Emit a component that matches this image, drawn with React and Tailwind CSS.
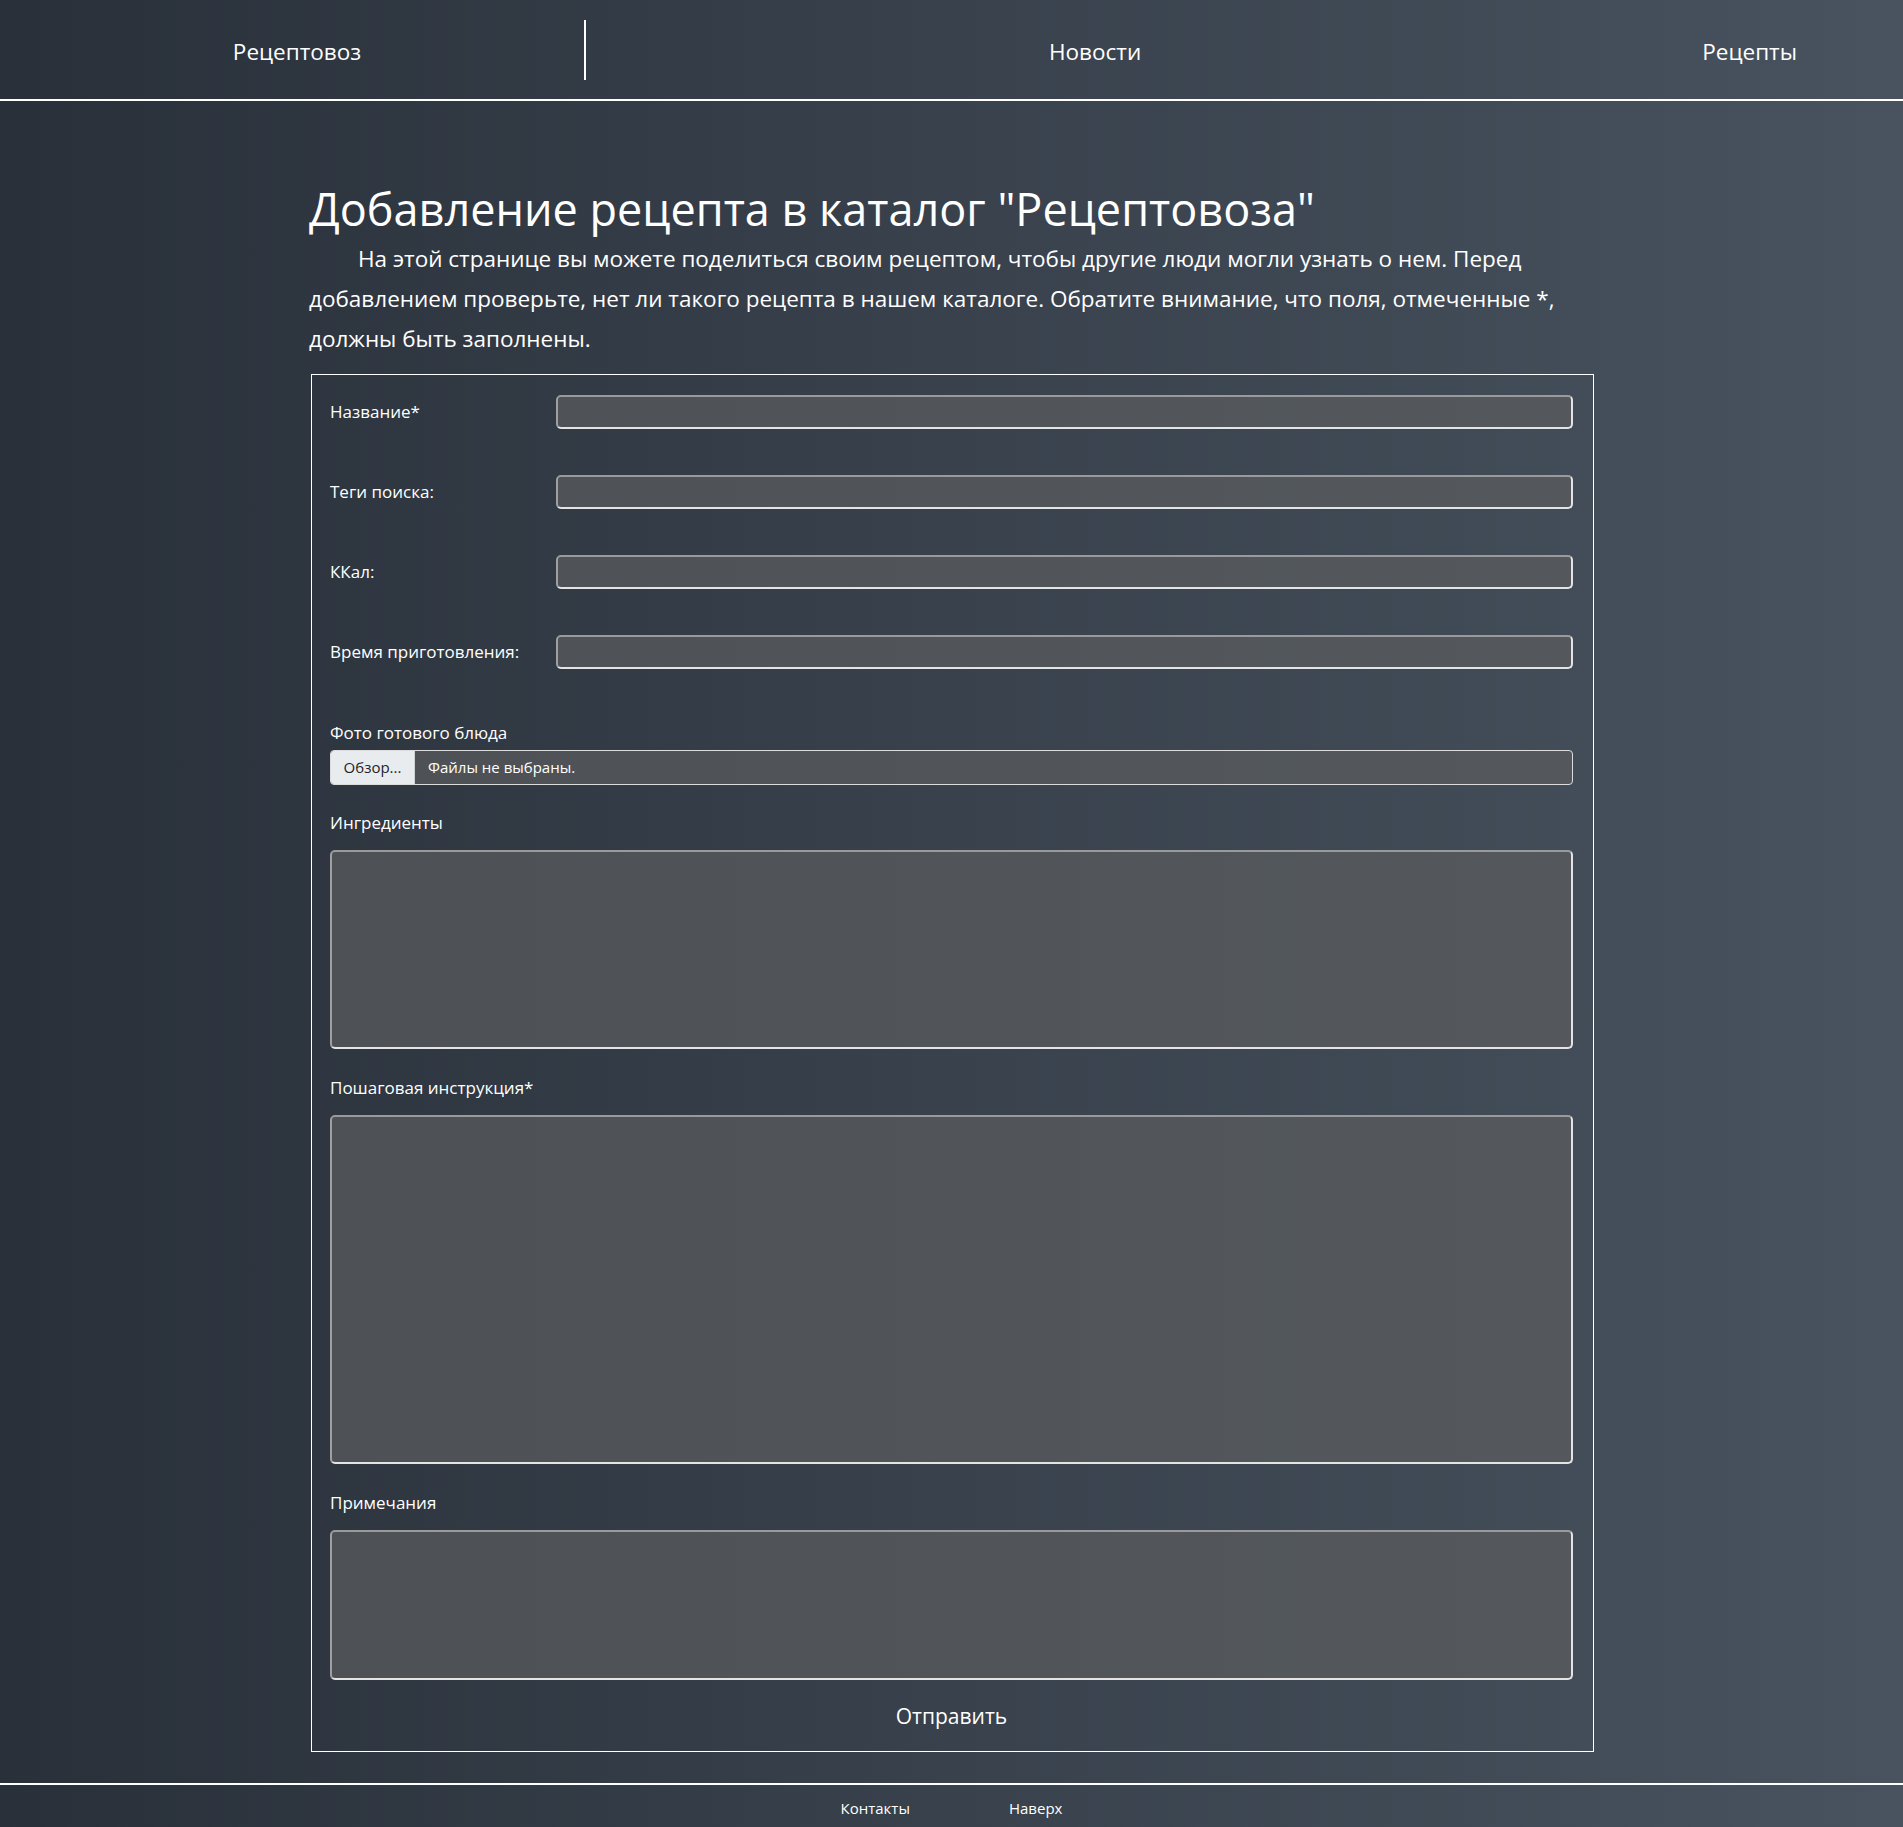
import { useState } from 'react';

const INPUT_CLS =
  'w-full rounded-[5px] border-2 border-t-[#9a9a9a] border-l-[#a0a0a0] border-b-[#e4e4e4] border-r-[#e4e4e4] bg-[rgba(93,94,96,0.68)] text-white outline-none px-2';

const ROWS = [
  { id: 'name', label: 'Название*' },
  { id: 'tags', label: 'Теги поиска:' },
  { id: 'kcal', label: 'ККал:' },
  { id: 'time', label: 'Время приготовления:' },
];

function Field({ label, children, gap = 'mt-[15px]' }) {
  return (
    <div>
      <label className="block text-[17px] leading-[24px]">{label}</label>
      <div className={gap}>{children}</div>
    </div>
  );
}

export default function App() {
  const [form, setForm] = useState({});
  const set = (k) => (e) => setForm({ ...form, [k]: e.target.value });

  return (
    <div className="min-h-screen bg-gradient-to-r from-[#29303a] to-[#48535f] text-white font-['Open_Sans',sans-serif]">
      {/* HEADER */}
      <header className="h-[101px] border-b-2 border-white flex items-center">
        <div className="w-[586px] h-[60px] border-r-2 border-white flex items-center justify-center pl-[10px] pt-[4px] text-[22.5px]">
          Рецептовоз
        </div>
        <nav className="flex-1 flex justify-between pl-[463px] pr-[106px] pt-[4px] text-[22.5px]">
          <a href="#">Новости</a>
          <a href="#">Рецепты</a>
        </nav>
      </header>

      {/* CONTENT */}
      <main className="w-[1285px] mx-auto pt-[81px] pb-[31px]">
        <h1 className="text-[45px] leading-[54px]">Добавление рецепта в каталог "Рецептовоза"</h1>
        <p className="mt-[3px] text-[22.5px] leading-[40px] indent-[49px]">
          На этой странице вы можете поделиться своим рецептом, чтобы другие люди могли узнать о нем. Перед
          добавлением проверьте, нет ли такого рецепта в нашем каталоге. Обратите внимание, что поля, отмеченные *,
          должны быть заполнены.
        </p>

        <form
          className="mt-[15px] ml-[2px] w-[1283px] border border-white pt-[20px] pb-[20px] pl-[18px] pr-[20px]"
          onSubmit={(e) => e.preventDefault()}
        >
          <div className="flex flex-col gap-[46px]">
            {ROWS.map((r) => (
              <div key={r.id} className="flex items-center">
                <label htmlFor={r.id} className="w-[226px] shrink-0 text-[17px]">{r.label}</label>
                <input id={r.id} value={form[r.id] ?? ''} onChange={set(r.id)} className={`${INPUT_CLS} h-[34px]`} />
              </div>
            ))}
          </div>

          <div className="mt-[52px]">
            <Field label="Фото готового блюда" gap="mt-[5px]">
              <div className="flex h-[35px] rounded-[4px] border border-[#dcdcdc] overflow-hidden bg-[rgba(93,94,96,0.68)] text-[15px]">
                <span className="w-[84px] bg-[#e9ecef] text-[#212529] border-r border-[#cfd3d7] flex items-center justify-center">
                  Обзор...
                </span>
                <span className="flex items-center pl-[13px]">Файлы не выбраны.</span>
              </div>
            </Field>
          </div>

          <div className="mt-[26px] flex flex-col gap-[27px]">
            <Field label="Ингредиенты">
              <textarea value={form.ingr ?? ''} onChange={set('ingr')} className={`${INPUT_CLS} block h-[199px] resize-none py-1`} />
            </Field>
            <Field label="Пошаговая инструкция*">
              <textarea value={form.steps ?? ''} onChange={set('steps')} className={`${INPUT_CLS} block h-[349px] resize-none py-1`} />
            </Field>
            <Field label="Примечания">
              <textarea value={form.notes ?? ''} onChange={set('notes')} className={`${INPUT_CLS} block h-[150px] resize-none py-1`} />
            </Field>
          </div>

          <div className="mt-[21px] flex justify-center">
            <button type="submit" className="text-[21px] leading-[30px] text-white bg-transparent">
              Отправить
            </button>
          </div>
        </form>
      </main>

      {/* FOOTER */}
      <footer className="border-t-2 border-white h-[45px] pt-[4px] flex items-center justify-center gap-[99px] text-[15px]">
        <a href="#">Контакты</a>
        <a href="#">Наверх</a>
      </footer>
    </div>
  );
}
